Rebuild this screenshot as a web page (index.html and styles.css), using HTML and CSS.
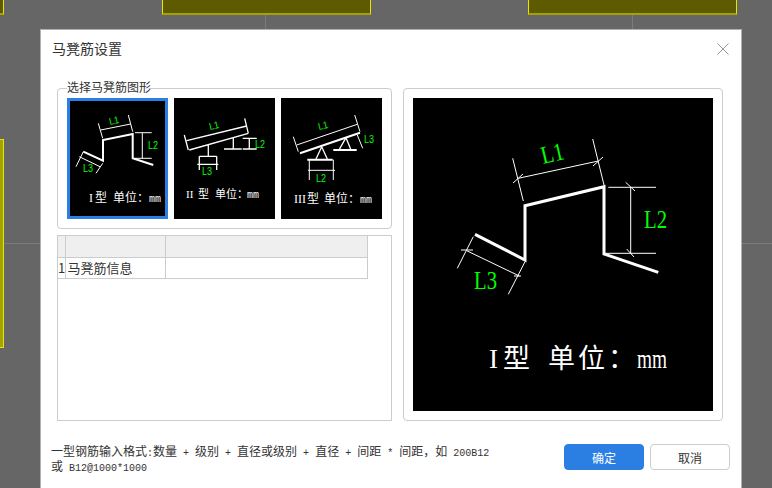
FILE: index.html
```html
<!DOCTYPE html>
<html>
<head>
    <title>马凳筋设置</title>
    <link rel="stylesheet" href="styles.css">
</head>
<body>
    <!-- drawing canvas behind the dialog -->
    <div class="canvas">
        <div class="grid-v grid-v-a"></div>
        <div class="grid-v grid-v-b"></div>
        <div class="grid-h"></div>
        <div class="block block-a"></div>
        <div class="block block-b"></div>
        <div class="block block-c"></div>
        <div class="block block-d"></div>
    </div>

    <div class="dialog">
        <div class="dialog-header">
            <span class="dialog-title">马凳筋设置</span>
            <svg class="close-icon" width="12" height="12" viewBox="0 0 12 12">
                <path d="M0.5 0.5L11.5 11.5M11.5 0.5L0.5 11.5" />
            </svg>
        </div>

        <div class="dialog-body">
            <div class="left-col">
                <fieldset class="shape-group">
                    <legend>选择马凳筋图形</legend>
                    <div class="thumb thumb-active">
                        <svg width="101" height="121" viewBox="0 0 101 121">
                            <path class="thick-sm" d="M16.3 53.7L36 62.7L36 42L65.7 36L65.7 60.3L86.3 67" />
                            <path class="thin" d="M33.7 32L63.7 26M31.3 25.3L35.7 40.3M61.3 17L65.7 33.7M68 34.7L84.7 34.7M68 60.3L84.7 60.3M75.3 34.7L75.3 60.3M12.3 58.7L33 68.7M16.3 53.7L9 68.7M35.7 65.3L29 75.3" />
                            <text class="dim dim-sm" x="43" y="27" textLength="10" lengthAdjust="spacingAndGlyphs" transform="rotate(-13 43 27)">L1</text>
                            <text class="dim dim-sm" x="81" y="51" textLength="10" lengthAdjust="spacingAndGlyphs">L2</text>
                            <text class="dim dim-sm" x="16" y="74" textLength="10" lengthAdjust="spacingAndGlyphs">L3</text>
                            <text class="label label-sm" y="104"><tspan x="22">I</tspan><tspan class="cjk" x="28">型</tspan><tspan class="cjk" x="46">单</tspan><tspan class="cjk" x="58">位</tspan><tspan class="cjk" x="70">：</tspan><tspan class="mono" x="82">mm</tspan></text>
                        </svg>
                    </div>
                    <div class="thumb">
                        <svg width="101" height="121" viewBox="0 0 101 121">
                            <path class="mid" d="M12.7 42.7L72.7 28M15.3 52L74.3 35.3M10.3 37L14.3 52M70.7 20.3L74.3 35.3M34.3 47L34.3 58M25.3 58.3L42.7 58.3M25.3 58.3L25.3 72M42.7 58.3L42.7 72M23.3 66.3L44.3 66.3M59.3 39.7L59.3 51M50 51L67.7 51M68.7 40.3L82.7 40.3M68.7 51L82.7 51M75.3 40.3L75.3 51" />
                            <text class="dim dim-sm" x="36" y="32" textLength="10" lengthAdjust="spacingAndGlyphs" transform="rotate(-13 36 32)">L1</text>
                            <text class="dim dim-sm" x="81" y="50" textLength="10" lengthAdjust="spacingAndGlyphs">L2</text>
                            <text class="dim dim-sm" x="28" y="77" textLength="10" lengthAdjust="spacingAndGlyphs">L3</text>
                            <text class="label label-xs" y="100"><tspan x="12">II</tspan><tspan class="cjk" x="24">型</tspan><tspan class="cjk" x="41">单</tspan><tspan class="cjk" x="52">位</tspan><tspan class="cjk" x="63">：</tspan><tspan class="mono" x="73">mm</tspan></text>
                        </svg>
                    </div>
                    <div class="thumb">
                        <svg width="101" height="121" viewBox="0 0 101 121">
                            <path class="thick-sm" d="M19 55.3L79 34.7M26.3 61.7L51.7 61.7M52.3 52L75.7 52" />
                            <path class="thin" d="M15.7 47L76.3 26.3M12.3 38.7L17.3 53.7M73.7 17L79 33.7M28.3 61.7L28.3 82M52.3 61.7L52.3 82M27 72.3L54 72.3M76.3 37L81.7 50.3" />
                            <path class="mid" d="M40.7 48.7L35 61M40.7 48.7L46.3 61M65 39.7L58.3 51.3M65 39.7L69.7 51.3" />
                            <text class="dim dim-sm" x="38" y="32" textLength="10" lengthAdjust="spacingAndGlyphs" transform="rotate(-13 38 32)">L1</text>
                            <text class="dim dim-sm" x="83" y="45" textLength="10" lengthAdjust="spacingAndGlyphs">L3</text>
                            <text class="dim dim-sm" x="35" y="84" textLength="10" lengthAdjust="spacingAndGlyphs">L2</text>
                            <text class="label label-sm" y="105"><tspan x="13">III</tspan><tspan class="cjk" x="26">型</tspan><tspan class="cjk" x="43">单</tspan><tspan class="cjk" x="55">位</tspan><tspan class="cjk" x="67">：</tspan><tspan class="mono" x="79">mm</tspan></text>
                        </svg>
                    </div>
                </fieldset>

                <div class="table-box">
                    <table class="info-table">
                        <tr class="head-row">
                            <td class="col-index"></td>
                            <td class="col-name"></td>
                            <td class="col-value"></td>
                        </tr>
                        <tr>
                            <td class="col-index">1</td>
                            <td class="col-name">马凳筋信息</td>
                            <td class="col-value"></td>
                        </tr>
                    </table>
                </div>
            </div>

            <div class="preview">
                <svg width="300" height="313" viewBox="0 0 300 313">
                    <path class="thick" d="M62 136.3L112 162L112 107.7L191 88.7L191 156L245.3 174.3" />
                    <path class="thin" d="M105.3 80.3L185.3 63M99.7 60.3L110.3 103M179.7 41L191 87M100 85L110 76M180 68L190 59M195.3 89.3L243 89.3M192 155.3L243 155.3M217.7 89.3L217.7 155.3M212.7 84.3L222 93M213.7 151L221 159M53.7 152.7L106.3 178M60.3 138.7L44.3 170.3M112 163.7L95.3 196.3M48 152L60 152M101 178L108 178" />
                    <text class="dim dim-lg" x="130" y="66" textLength="23" lengthAdjust="spacingAndGlyphs" transform="rotate(-13 130 66)">L1</text>
                    <text class="dim dim-lg" x="231" y="130" textLength="23" lengthAdjust="spacingAndGlyphs">L2</text>
                    <text class="dim dim-lg" x="61" y="191" textLength="23" lengthAdjust="spacingAndGlyphs">L3</text>
                    <text class="label label-lg" y="270"><tspan x="76">I</tspan><tspan class="cjk" x="90">型</tspan><tspan class="cjk" x="135">单</tspan><tspan class="cjk" x="165">位</tspan><tspan class="cjk" x="195">：</tspan></text>
                    <text class="label label-lg" x="224" y="270" textLength="30" lengthAdjust="spacingAndGlyphs">mm</text>
                </svg>
            </div>
        </div>

        <div class="dialog-footer">
            <div class="note">
                <div>一型钢筋输入格式<span class="mono">:</span>数量<span class="mono"> + </span>级别<span class="mono"> + </span>直径或级别<span class="mono"> + </span>直径<span class="mono"> + </span>间距<span class="mono"> * </span>间距，如<span class="mono"> 200B12</span></div>
                <div>或<span class="mono"> B12@1000*1000</span></div>
            </div>
            <div class="buttons">
                <button class="btn btn-primary">确定</button>
                <button class="btn">取消</button>
            </div>
        </div>
    </div>
</body>
</html>
```

FILE: styles.css
```css
/* Page and canvas background */
html, body {
    margin: 0;
    height: 100%;
    overflow: hidden;
}

body {
    font-family: "Noto Sans CJK SC", "Liberation Sans", sans-serif;
    color: #333;
    background-color: #666;
}

.canvas {
    position: absolute;
    left: 0;
    top: 0;
    width: 772px;
    height: 488px;
}

.grid-v {
    position: absolute;
    top: 0;
    width: 1px;
    height: 488px;
    background-color: #7c7c7c;
}

.grid-v-a { left: 265px; }
.grid-v-b { left: 632px; }

.grid-h {
    position: absolute;
    left: 0;
    top: 243px;
    width: 772px;
    height: 1px;
    background-color: #7c7c7c;
}

.block {
    position: absolute;
    box-sizing: border-box;
    background-color: #5e5a00;
    border: 1px solid #e6e600;
    border-bottom: 2px solid #a3a300;
}

.block-a { left: 162px; top: -20px; width: 209px; height: 35px; }
.block-b { left: 528px; top: -20px; width: 209px; height: 35px; }
.block-c { left: -20px; top: -20px; width: 24px; height: 35px; }
.block-d {
    left: -20px;
    top: 139px;
    width: 24px;
    height: 209px;
    background-color: #a3a300;
    border-bottom: 1px solid #e6e600;
}

/* Dialog */
.dialog {
    position: absolute;
    left: 40px;
    top: 29px;
    width: 702px;
    height: 480px;
    box-sizing: border-box;
    background-color: #fff;
    border: 1px solid #b0b0b0;
}

.dialog-header {
    display: flex;
    justify-content: space-between;
    align-items: center;
    height: 50px;
    padding: 0 12px 12px 11px;
    box-sizing: border-box;
}

.dialog-title {
    font-size: 14px;
    margin-top: -3px;
}

.close-icon path {
    fill: none;
    stroke: #999;
    stroke-width: 1;
}

.dialog-body {
    display: flex;
    gap: 11px;
    padding: 0 16px;
}

.left-col {
    width: 335px;
}

/* Shape picker */
.shape-group {
    display: flex;
    gap: 6px;
    margin: 0;
    padding: 2px 9px 9px;
    border: 1px solid #ccc;
    border-radius: 4px;
}

.shape-group legend {
    padding: 0 0 2px;
    margin-left: 0;
    font-size: 12px;
    line-height: 14px;
}

.thumb {
    position: relative;
    width: 101px;
    height: 121px;
    background-color: #000;
}

.thumb svg,
.preview svg {
    display: block;
}

.thumb-active {
    outline: 3px solid #2b7fe3;
    outline-offset: -3px;
}

/* SVG strokes and text */
.thick, .thick-sm, .thin, .mid {
    fill: none;
    stroke: #fff;
}

.thick { stroke-width: 3; }
.thick-sm { stroke-width: 2; }
.mid { stroke-width: 1.3; }
.thin { stroke-width: 1; }

.dim {
    font-family: "Liberation Serif", serif;
    fill: #0f0;
}

.dim-sm {
    font-family: "Liberation Sans", sans-serif;
    font-size: 10px;
}

.dim-lg { font-size: 25px; }

.label {
    font-family: "Liberation Serif", serif;
    fill: #fff;
}

.label .cjk { font-family: "Noto Sans CJK SC", sans-serif; }
.label .mono {
    font-family: "Liberation Mono", monospace;
    font-size: 10px;
}

.label-xs { font-size: 11px; }
.label-sm { font-size: 12px; opacity: 0.99; }
.label-lg { font-size: 27px; }

/* Info table */
.table-box {
    height: 186px;
    margin-top: 6px;
    box-sizing: border-box;
    border: 1px solid #ccc;
}

.info-table {
    table-layout: fixed;
    width: 309px;
    border-collapse: collapse;
    font-size: 13px;
}

.info-table td {
    height: 21px;
    padding: 0 2px;
    box-sizing: border-box;
    border: 1px solid #ccc;
    overflow: hidden;
    white-space: nowrap;
}

.info-table td:first-child {
    border-left: none;
    border-top: none;
}

.head-row td {
    background-color: #efefef;
    border-top: none;
}

.col-index { width: 7px; }
.info-table td.col-index { padding: 0; text-align: center; }
.col-name { width: 100px; }
.col-value { width: 202px; }

/* Large preview */
.preview {
    width: 300px;
    height: 313px;
    margin-top: 8px;
    padding: 9px;
    border: 1px solid #ccc;
    border-radius: 4px;
}

.preview svg {
    background-color: #000;
}

/* Footer */
.dialog-footer {
    display: flex;
    justify-content: space-between;
    align-items: flex-start;
    margin-top: 23px;
    padding: 0 11px 0 10px;
}

.note {
    font-size: 12px;
    line-height: 14px;
    white-space: nowrap;
}

.note .mono {
    font-family: "Liberation Mono", monospace;
    font-size: 10px;
    line-height: 1;
}

.buttons {
    display: flex;
    gap: 6px;
}

.btn {
    width: 80px;
    height: 26px;
    padding: 0;
    font-family: inherit;
    font-size: 12px;
    color: #333;
    background-color: #fff;
    border: 1px solid #ccc;
    border-radius: 4px;
}

.btn-primary {
    color: #fff;
    background-color: #2b7fe3;
    border-color: #2b7fe3;
}
```
